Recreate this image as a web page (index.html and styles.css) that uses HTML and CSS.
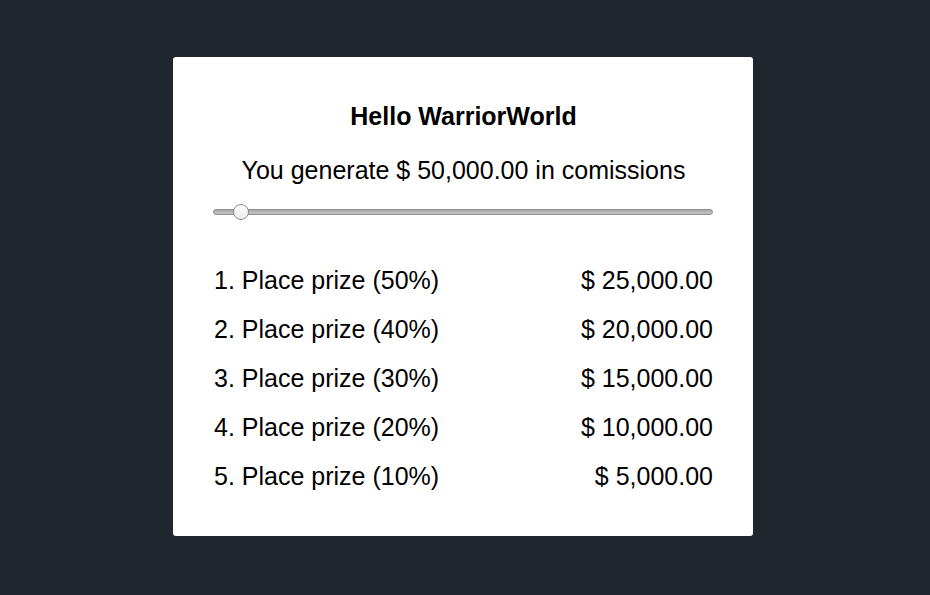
FILE: index.html
```html
<!DOCTYPE html>
<html lang="en">
<head>
<meta charset="utf-8">
<title>Prize calculator</title>
<link rel="stylesheet" href="styles.css">
</head>
<body>
<main class="page">
  <section class="card">
    <h1 class="title">Hello WarriorWorld</h1>
    <p class="subtitle">You generate $ 50,000.00 in comissions</p>
    <div class="slider">
      <div class="track"></div>
      <div class="thumb"></div>
    </div>
    <ul class="prizes">
      <li class="prize"><span>1. Place prize (50%)</span><span>$ 25,000.00</span></li>
      <li class="prize"><span>2. Place prize (40%)</span><span>$ 20,000.00</span></li>
      <li class="prize"><span>3. Place prize (30%)</span><span>$ 15,000.00</span></li>
      <li class="prize"><span>4. Place prize (20%)</span><span>$ 10,000.00</span></li>
      <li class="prize"><span>5. Place prize (10%)</span><span>$ 5,000.00</span></li>
    </ul>
  </section>
</main>
</body>
</html>
```

FILE: styles.css
```css
html, body {
  margin: 0;
  padding: 0;
  height: 100%;
}

body {
  background: #21262e;
  font-family: "Liberation Sans", Arial, Helvetica, sans-serif;
  color: #000;
}

.page {
  display: flex;
  justify-content: center;
  padding: 57px 4px 0 0;
}

.card {
  width: 580px;
  box-sizing: border-box;
  background: #fff;
  border-radius: 3px;
  padding: 44px 40px 35px 41px;
  display: flex;
  flex-direction: column;
}

.title {
  margin: 0;
  font-size: 25px;
  line-height: 30px;
  font-weight: 700;
  text-align: center;
}

.subtitle {
  margin: 24px 0 0;
  font-size: 25px;
  line-height: 30px;
  text-align: center;
}

.slider {
  position: relative;
  height: 16px;
  margin: 19px 0 0 -1px;
  display: flex;
  align-items: center;
}

.track {
  flex: 1;
  height: 6px;
  box-sizing: border-box;
  border-radius: 3px;
  background: linear-gradient(#a9a9a9, #c4c4c4);
  border: 1px solid #8e8e8e;
}

.thumb {
  position: absolute;
  left: 20px;
  top: 0;
  width: 16px;
  height: 16px;
  box-sizing: border-box;
  border-radius: 50%;
  border: 1px solid #8a8a8a;
  background: linear-gradient(#ffffff, #ececec);
}

.prizes {
  list-style: none;
  margin: 36px 0 0;
  padding: 0;
}

.prize {
  display: flex;
  justify-content: space-between;
  font-size: 25px;
  line-height: 49px;
}
```
